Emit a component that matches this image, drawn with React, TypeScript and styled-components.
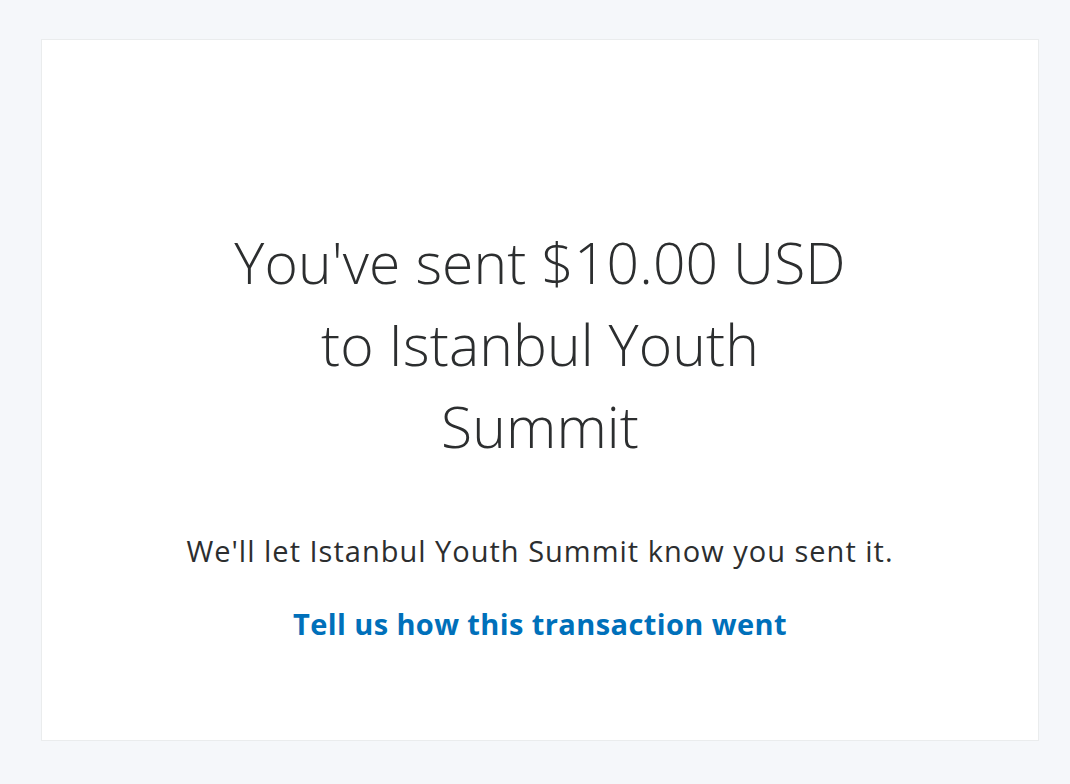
import styled, { createGlobalStyle } from "styled-components";

const GlobalStyle = createGlobalStyle`
    html, body {
        margin: 0;
        padding: 0;
        background: #f5f7fa;
    }
    body {
        font-family: "Open Sans", "Liberation Sans", sans-serif;
        color: #2c2e2f;
    }
`;

const Page = styled.div`
    min-height: 784px;
    box-sizing: border-box;
    padding: 39px 31px 43px 41px;
`;

const Card = styled.section`
    height: 702px;
    box-sizing: border-box;
    background: #ffffff;
    border: 1px solid #eaeced;
    display: flex;
    flex-direction: column;
    align-items: center;
    padding-top: 181px;
`;

const Heading = styled.h1`
    margin: 0;
    max-width: 620px;
    font-family: "Open Sans", sans-serif;
    font-weight: 300;
    font-size: 57px;
    line-height: 82px;
    letter-spacing: 0.1px;
    text-align: center;
    color: #2c2e2f;
`;

const Message = styled.p`
    margin: 66px 0 0;
    font-family: "Open Sans", sans-serif;
    font-size: 29px;
    line-height: 36px;
    letter-spacing: 1px;
    text-align: center;
    color: #2c2e2f;
`;

const FeedbackLink = styled.a`
    margin-top: 37px;
    font-family: "Open Sans", sans-serif;
    font-weight: 700;
    font-size: 29px;
    line-height: 36px;
    letter-spacing: 0.4px;
    color: #0070ba;
    text-decoration: none;
    cursor: pointer;
`;

export default function App() {
    return (
        <>
            <GlobalStyle />
            <Page>
                <Card>
                    <Heading>You've sent $10.00 USD to Istanbul Youth Summit</Heading>
                    <Message>We'll let Istanbul Youth Summit know you sent it.</Message>
                    <FeedbackLink href="#">Tell us how this transaction went</FeedbackLink>
                </Card>
            </Page>
        </>
    );
}
